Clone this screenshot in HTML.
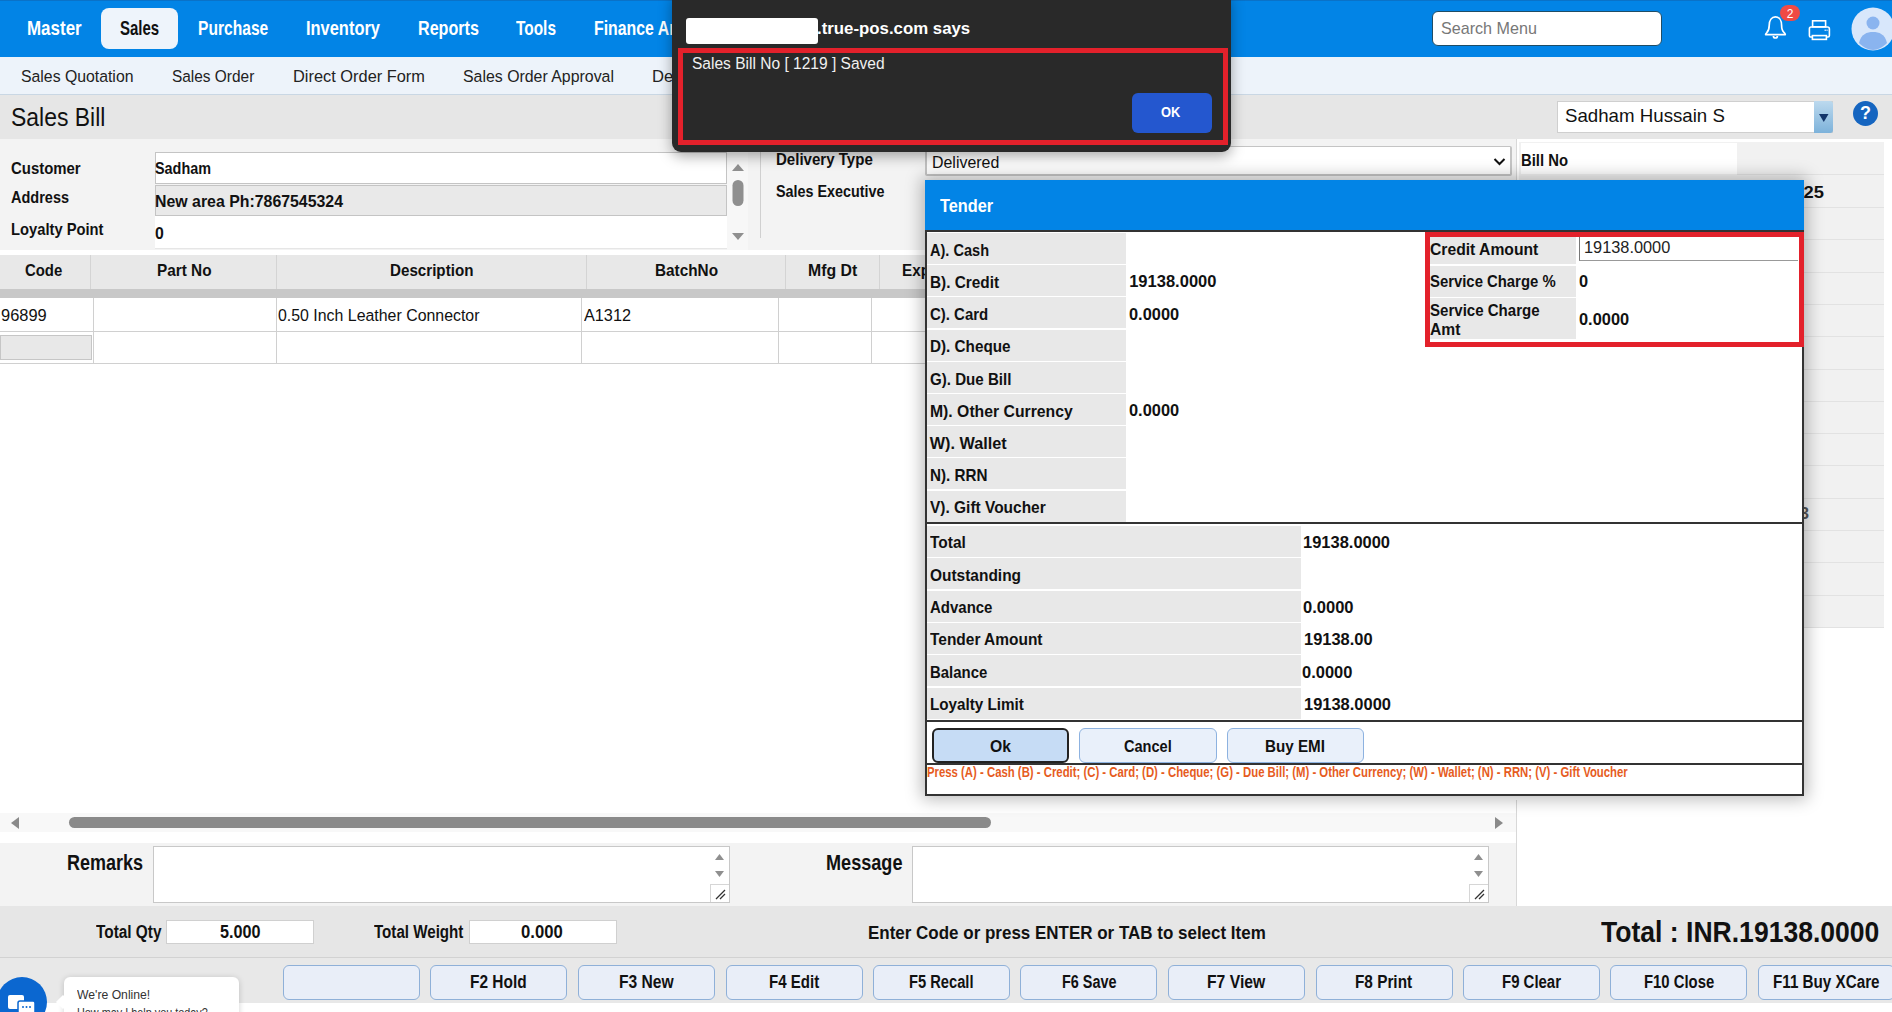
<!DOCTYPE html>
<html><head><meta charset="utf-8"><title>Sales Bill</title>
<style>
html,body{margin:0;padding:0;width:1892px;height:1012px;overflow:hidden;background:#fff;font-family:"Liberation Sans",sans-serif;position:relative}
.t{position:absolute;white-space:nowrap;line-height:1;transform-origin:0 0;font-family:"Liberation Sans",sans-serif}
</style></head><body>
<div style="position:absolute;left:0px;top:0px;width:1892px;height:57px;background:#0284e6"></div>
<div style="position:absolute;left:0px;top:0px;width:1892px;height:1px;background:#0a72c8"></div>
<div style="position:absolute;left:101px;top:8px;width:77px;height:41px;background:#eef4fb;border-radius:8px"></div>
<div style="position:absolute;left:0px;top:57px;width:1892px;height:37px;background:#edf3fa"></div>
<div style="position:absolute;left:0px;top:94px;width:1892px;height:1px;background:#c9d7e4"></div>
<div style="position:absolute;left:0px;top:95px;width:1892px;height:44px;background:#e6e6e6"></div>
<div style="position:absolute;left:0px;top:139px;width:1517px;height:111px;background:#f3f3f3"></div>
<div style="position:absolute;left:155px;top:152px;width:572px;height:32px;background:#fff;border:1px solid #c4c4c4;box-sizing:border-box"></div>
<div style="position:absolute;left:155px;top:185px;width:572px;height:31px;background:#e9e9e9;border:1px solid #c4c4c4;box-sizing:border-box"></div>
<div style="position:absolute;left:155px;top:216px;width:572px;height:33px;background:#fff;border-bottom:1px solid #e6e6e6;box-sizing:border-box"></div>
<div style="position:absolute;left:727px;top:152px;width:21px;height:98px;background:#f7f7f7"></div>
<svg style="position:absolute;left:727px;top:152px" width="22" height="98"><path d="M5 19 L11 12 L17 19 Z" fill="#8f8f8f"/><rect x="5.5" y="28" width="11" height="26" rx="5.5" fill="#8f8f8f"/><path d="M5 81 L11 88 L17 81 Z" fill="#8f8f8f"/></svg>
<div style="position:absolute;left:760px;top:152px;width:1px;height:86px;background:#d0d0d0"></div>
<div style="position:absolute;left:925px;top:146px;width:587px;height:30px;background:#fff;border:2px solid #c4c4c4;border-top-width:1px;border-radius:2px;box-sizing:border-box"></div>
<svg style="position:absolute;left:1493px;top:155px" width="14" height="14"><path d="M1.5 4 L6.5 9 L11.5 4" stroke="#111" stroke-width="2" fill="none"/></svg>
<div style="position:absolute;left:0px;top:255px;width:925px;height:34px;background:#e8e8e8"></div>
<div style="position:absolute;left:0px;top:289px;width:925px;height:9px;background:#c8c8c8"></div>
<div style="position:absolute;left:90px;top:255px;width:1px;height:34px;background:#d4d4d4"></div>
<div style="position:absolute;left:276px;top:255px;width:1px;height:34px;background:#d4d4d4"></div>
<div style="position:absolute;left:586px;top:255px;width:1px;height:34px;background:#d4d4d4"></div>
<div style="position:absolute;left:785px;top:255px;width:1px;height:34px;background:#d4d4d4"></div>
<div style="position:absolute;left:879px;top:255px;width:1px;height:34px;background:#d4d4d4"></div>
<div style="position:absolute;left:0px;top:298px;width:925px;height:65px;background:#fff"></div>
<div style="position:absolute;left:0px;top:331px;width:925px;height:1px;background:#d0d0d0"></div>
<div style="position:absolute;left:0px;top:363px;width:925px;height:1px;background:#d0d0d0"></div>
<div style="position:absolute;left:93px;top:298px;width:1px;height:65px;background:#d0d0d0"></div>
<div style="position:absolute;left:276px;top:298px;width:1px;height:65px;background:#d0d0d0"></div>
<div style="position:absolute;left:581px;top:298px;width:1px;height:65px;background:#d0d0d0"></div>
<div style="position:absolute;left:778px;top:298px;width:1px;height:65px;background:#d0d0d0"></div>
<div style="position:absolute;left:871px;top:298px;width:1px;height:65px;background:#d0d0d0"></div>
<div style="position:absolute;left:0px;top:335px;width:92px;height:25px;background:#e8e8e8;border:1px solid #c6c6c6;box-sizing:border-box"></div>
<div style="position:absolute;left:0px;top:813px;width:1517px;height:19px;background:#f8f8f8"></div>
<div style="position:absolute;left:69px;top:817px;width:922px;height:11px;background:#8a8a8a;border-radius:6px"></div>
<svg style="position:absolute;left:8px;top:816px" width="14" height="14"><path d="M11 1 L3 7 L11 13 Z" fill="#8a8a8a"/></svg>
<svg style="position:absolute;left:1492px;top:816px" width="14" height="14"><path d="M3 1 L11 7 L3 13 Z" fill="#8a8a8a"/></svg>
<div style="position:absolute;left:1516px;top:800px;width:1px;height:106px;background:#d8d8d8"></div>
<div style="position:absolute;left:0px;top:843px;width:1516px;height:63px;background:#f3f3f3"></div>
<div style="position:absolute;left:153px;top:846px;width:577px;height:57px;background:#fff;border:1px solid #c8c8c8;box-sizing:border-box"></div>
<div style="position:absolute;left:912px;top:846px;width:577px;height:57px;background:#fff;border:1px solid #c8c8c8;box-sizing:border-box"></div>
<svg style="position:absolute;left:710px;top:847px" width="19" height="55"><path d="M5 13 L9.5 7 L14 13 Z" fill="#8f8f8f"/><path d="M5 24 L9.5 30 L14 24 Z" fill="#8f8f8f"/><rect x="0.5" y="37.5" width="19" height="18" fill="#fff" stroke="#d6d6d6"/><path d="M6 52 L15 43 M10 52 L15 47" stroke="#333" stroke-width="1.3"/></svg>
<svg style="position:absolute;left:1469px;top:847px" width="19" height="55"><path d="M5 13 L9.5 7 L14 13 Z" fill="#8f8f8f"/><path d="M5 24 L9.5 30 L14 24 Z" fill="#8f8f8f"/><rect x="0.5" y="37.5" width="19" height="18" fill="#fff" stroke="#d6d6d6"/><path d="M6 52 L15 43 M10 52 L15 47" stroke="#333" stroke-width="1.3"/></svg>
<div style="position:absolute;left:0px;top:906px;width:1892px;height:51px;background:#e6e6e6"></div>
<div style="position:absolute;left:0px;top:957px;width:1892px;height:1px;background:#d2d2d2"></div>
<div style="position:absolute;left:166px;top:920px;width:148px;height:24px;background:#fff;border:1px solid #d0d0d0;box-sizing:border-box"></div>
<div style="position:absolute;left:469px;top:920px;width:148px;height:24px;background:#fff;border:1px solid #d0d0d0;box-sizing:border-box"></div>
<div style="position:absolute;left:0px;top:958px;width:1892px;height:45px;background:#e8e8e8"></div>
<div style="position:absolute;left:283px;top:965px;width:137px;height:35px;background:#e9eef8;border:1px solid #8fb0d8;border-radius:6px;box-sizing:border-box"></div>
<div style="position:absolute;left:430px;top:965px;width:137px;height:35px;background:#e9eef8;border:1px solid #8fb0d8;border-radius:6px;box-sizing:border-box"></div>
<div style="position:absolute;left:578px;top:965px;width:137px;height:35px;background:#e9eef8;border:1px solid #8fb0d8;border-radius:6px;box-sizing:border-box"></div>
<div style="position:absolute;left:726px;top:965px;width:137px;height:35px;background:#e9eef8;border:1px solid #8fb0d8;border-radius:6px;box-sizing:border-box"></div>
<div style="position:absolute;left:873px;top:965px;width:137px;height:35px;background:#e9eef8;border:1px solid #8fb0d8;border-radius:6px;box-sizing:border-box"></div>
<div style="position:absolute;left:1020px;top:965px;width:137px;height:35px;background:#e9eef8;border:1px solid #8fb0d8;border-radius:6px;box-sizing:border-box"></div>
<div style="position:absolute;left:1168px;top:965px;width:137px;height:35px;background:#e9eef8;border:1px solid #8fb0d8;border-radius:6px;box-sizing:border-box"></div>
<div style="position:absolute;left:1316px;top:965px;width:137px;height:35px;background:#e9eef8;border:1px solid #8fb0d8;border-radius:6px;box-sizing:border-box"></div>
<div style="position:absolute;left:1463px;top:965px;width:137px;height:35px;background:#e9eef8;border:1px solid #8fb0d8;border-radius:6px;box-sizing:border-box"></div>
<div style="position:absolute;left:1610px;top:965px;width:137px;height:35px;background:#e9eef8;border:1px solid #8fb0d8;border-radius:6px;box-sizing:border-box"></div>
<div style="position:absolute;left:1758px;top:965px;width:137px;height:35px;background:#e9eef8;border:1px solid #8fb0d8;border-radius:6px;box-sizing:border-box"></div>
<div class="t" style="left:27.4px;top:18.79px;font-size:19.42px;font-weight:bold;color:#ffffff;transform:scaleX(0.8737);">Master</div>
<div class="t" style="left:120.2px;top:18.79px;font-size:19.42px;font-weight:bold;color:#111;transform:scaleX(0.7724);">Sales</div>
<div class="t" style="left:197.6px;top:18.79px;font-size:19.42px;font-weight:bold;color:#ffffff;transform:scaleX(0.8040);">Purchase</div>
<div class="t" style="left:306.0px;top:18.79px;font-size:19.42px;font-weight:bold;color:#ffffff;transform:scaleX(0.8466);">Inventory</div>
<div class="t" style="left:418.0px;top:18.79px;font-size:19.42px;font-weight:bold;color:#ffffff;transform:scaleX(0.8313);">Reports</div>
<div class="t" style="left:516.0px;top:18.79px;font-size:19.42px;font-weight:bold;color:#ffffff;transform:scaleX(0.7945);">Tools</div>
<div class="t" style="left:594.0px;top:18.79px;font-size:19.42px;font-weight:bold;color:#ffffff;transform:scaleX(0.8168);">Finance Analysis</div>
<div class="t" style="left:21.1px;top:68.53px;font-size:15.94px;font-weight:normal;color:#222;transform:scaleX(0.9917);">Sales Quotation</div>
<div class="t" style="left:172.2px;top:68.53px;font-size:15.94px;font-weight:normal;color:#222;transform:scaleX(0.9676);">Sales Order</div>
<div class="t" style="left:293.0px;top:68.53px;font-size:15.94px;font-weight:normal;color:#222;transform:scaleX(1.0278);">Direct Order Form</div>
<div class="t" style="left:463.0px;top:68.53px;font-size:15.94px;font-weight:normal;color:#222;transform:scaleX(0.9965);">Sales Order Approval</div>
<div class="t" style="left:652.0px;top:68.53px;font-size:15.94px;font-weight:normal;color:#222;transform:scaleX(1.0420);">Delivery</div>
<div class="t" style="left:10.5px;top:105.11px;font-size:25.07px;font-weight:normal;color:#111;transform:scaleX(0.9155);">Sales Bill</div>
<div class="t" style="left:10.6px;top:160.79px;font-size:16.81px;font-weight:bold;color:#111;transform:scaleX(0.8883);">Customer</div>
<div class="t" style="left:10.6px;top:189.99px;font-size:16.81px;font-weight:bold;color:#111;transform:scaleX(0.8636);">Address</div>
<div class="t" style="left:10.6px;top:221.79px;font-size:16.81px;font-weight:bold;color:#111;transform:scaleX(0.8773);">Loyalty Point</div>
<div class="t" style="left:155.4px;top:160.79px;font-size:16.81px;font-weight:bold;color:#111;transform:scaleX(0.8563);">Sadham</div>
<div class="t" style="left:155.4px;top:194.19px;font-size:16.81px;font-weight:bold;color:#111;transform:scaleX(0.9453);">New area Ph:7867545324</div>
<div class="t" style="left:155.0px;top:225.99px;font-size:16.81px;font-weight:bold;color:#111;transform:scaleX(0.9410);">0</div>
<div class="t" style="left:776.4px;top:151.97px;font-size:16.96px;font-weight:bold;color:#111;transform:scaleX(0.8889);">Delivery Type</div>
<div class="t" style="left:776.4px;top:183.87px;font-size:16.96px;font-weight:bold;color:#111;transform:scaleX(0.8471);">Sales Executive</div>
<div class="t" style="left:931.7px;top:154.11px;font-size:16.09px;font-weight:normal;color:#111;transform:scaleX(0.9904);">Delivered</div>
<div class="t" style="left:24.8px;top:261.88px;font-size:16.23px;font-weight:bold;color:#111;transform:scaleX(0.9192);">Code</div>
<div class="t" style="left:156.5px;top:261.88px;font-size:16.23px;font-weight:bold;color:#111;transform:scaleX(0.9459);">Part No</div>
<div class="t" style="left:390.0px;top:261.88px;font-size:16.23px;font-weight:bold;color:#111;transform:scaleX(0.9351);">Description</div>
<div class="t" style="left:654.8px;top:261.88px;font-size:16.23px;font-weight:bold;color:#111;transform:scaleX(0.9455);">BatchNo</div>
<div class="t" style="left:807.8px;top:261.88px;font-size:16.23px;font-weight:bold;color:#111;transform:scaleX(0.9746);">Mfg Dt</div>
<div class="t" style="left:901.7px;top:261.88px;font-size:16.23px;font-weight:bold;color:#111;transform:scaleX(0.9396);">Exp Dt</div>
<div class="t" style="left:1.3px;top:307.41px;font-size:16.09px;font-weight:normal;color:#111;transform:scaleX(1.0216);">96899</div>
<div class="t" style="left:278.0px;top:307.41px;font-size:16.09px;font-weight:normal;color:#111;transform:scaleX(0.9887);">0.50 Inch Leather Connector</div>
<div class="t" style="left:584.0px;top:307.41px;font-size:16.09px;font-weight:normal;color:#111;transform:scaleX(1.0103);">A1312</div>
<div class="t" style="left:67.2px;top:852.68px;font-size:21.45px;font-weight:bold;color:#111;transform:scaleX(0.8397);">Remarks</div>
<div class="t" style="left:825.5px;top:852.68px;font-size:21.45px;font-weight:bold;color:#111;transform:scaleX(0.8442);">Message</div>
<div class="t" style="left:96.2px;top:922.95px;font-size:18.41px;font-weight:bold;color:#111;transform:scaleX(0.8355);">Total Qty</div>
<div class="t" style="left:219.5px;top:922.95px;font-size:18.41px;font-weight:bold;color:#111;transform:scaleX(0.8793);">5.000</div>
<div class="t" style="left:373.6px;top:922.95px;font-size:18.41px;font-weight:bold;color:#111;transform:scaleX(0.8223);">Total Weight</div>
<div class="t" style="left:520.7px;top:922.95px;font-size:18.41px;font-weight:bold;color:#111;transform:scaleX(0.9053);">0.000</div>
<div class="t" style="left:867.5px;top:922.81px;font-size:19.28px;font-weight:bold;color:#111;transform:scaleX(0.8812);">Enter Code or press ENTER or TAB to select Item</div>
<div class="t" style="left:1600.5px;top:917.24px;font-size:29.42px;font-weight:bold;color:#111;transform:scaleX(0.9027);">Total : INR.19138.0000</div>
<div class="t" style="left:470.0px;top:974.44px;font-size:17.83px;font-weight:bold;color:#111;transform:scaleX(0.8660);">F2 Hold</div>
<div class="t" style="left:618.5px;top:974.44px;font-size:17.83px;font-weight:bold;color:#111;transform:scaleX(0.8765);">F3 New</div>
<div class="t" style="left:768.6px;top:974.44px;font-size:17.83px;font-weight:bold;color:#111;transform:scaleX(0.8448);">F4 Edit</div>
<div class="t" style="left:908.9px;top:974.44px;font-size:17.83px;font-weight:bold;color:#111;transform:scaleX(0.8240);">F5 Recall</div>
<div class="t" style="left:1061.5px;top:974.44px;font-size:17.83px;font-weight:bold;color:#111;transform:scaleX(0.8087);">F6 Save</div>
<div class="t" style="left:1207.3px;top:974.44px;font-size:17.83px;font-weight:bold;color:#111;transform:scaleX(0.8811);">F7 View</div>
<div class="t" style="left:1355.2px;top:974.44px;font-size:17.83px;font-weight:bold;color:#111;transform:scaleX(0.8605);">F8 Print</div>
<div class="t" style="left:1501.6px;top:974.44px;font-size:17.83px;font-weight:bold;color:#111;transform:scaleX(0.8387);">F9 Clear</div>
<div class="t" style="left:1643.6px;top:974.44px;font-size:17.83px;font-weight:bold;color:#111;transform:scaleX(0.8336);">F10 Close</div>
<div class="t" style="left:1773.0px;top:974.44px;font-size:17.83px;font-weight:bold;color:#111;transform:scaleX(0.8531);">F11 Buy XCare</div>
<div style="position:absolute;left:1432px;top:11px;width:230px;height:35px;background:#fff;border:1px solid #1f4d66;border-radius:6px;box-sizing:border-box"></div>
<div class="t" style="left:1441.0px;top:20.16px;font-size:16.38px;font-weight:normal;color:#777;transform:scaleX(0.9856);">Search Menu</div>
<svg style="position:absolute;left:1762px;top:14px" width="28" height="28" viewBox="0 0 28 28"><path d="M3.6 20.6 Q3.6 19.6 4.6 18.8 Q7.2 16.5 7.2 11.5 C7.2 6.3 9.8 2.9 13.4 2.9 C17 2.9 19.6 6.3 19.6 11.5 Q19.6 16.5 22.4 18.8 Q23.3 19.6 23.3 20.6 Z" fill="none" stroke="#fff" stroke-width="1.7" stroke-linejoin="round"/><path d="M11.4 22 A2 2 0 0 0 15.4 22" fill="none" stroke="#fff" stroke-width="1.7"/></svg>
<div style="position:absolute;left:1780px;top:5px;width:20px;height:16px;border-radius:8px;background:#ef4a45;color:#fff;font:12px 'Liberation Sans',sans-serif;line-height:18px;text-align:center">2</div>
<svg style="position:absolute;left:1807px;top:17px" width="26" height="26" viewBox="0 0 26 26"><rect x="5.6" y="3.8" width="13" height="6" fill="none" stroke="#fff" stroke-width="1.6"/><path d="M4 10 H20.5 Q22.4 10 22.4 12 V18.5 Q22.4 20 21 20 H3.5 Q2.4 20 2.4 18.5 V12 Q2.4 10 4 10 Z" fill="none" stroke="#fff" stroke-width="1.6"/><rect x="5.4" y="18.6" width="14" height="3.8" fill="#0284e6" stroke="#fff" stroke-width="1.6"/><rect x="17.5" y="12.6" width="1.6" height="1.3" fill="#cfe3fa"/><rect x="19.5" y="12.6" width="1.2" height="1.3" fill="#cfe3fa"/></svg>
<svg style="position:absolute;left:1851px;top:7px" width="44" height="44" viewBox="0 0 44 44"><circle cx="22" cy="22" r="21.5" fill="#d8e7fb"/><circle cx="22" cy="16" r="6.5" fill="#8ab4ef"/><path d="M8 36 C10 27 16 25 22 25 C28 25 34 27 36 36 C32 40 27 43 22 43 C17 43 12 40 8 36 Z" fill="#8ab4ef"/></svg>
<div style="position:absolute;left:1557px;top:101px;width:276px;height:32px;background:#fff;border:1px solid #cfcfcf;box-sizing:border-box"></div>
<div style="position:absolute;left:1814px;top:101px;width:19px;height:32px;background:linear-gradient(#bcd9ee,#7db2da);border-radius:0 3px 3px 0"></div>
<svg style="position:absolute;left:1816px;top:110px" width="14" height="14"><path d="M3 4 L12.5 4 L7.75 12 Z" fill="#13356a"/></svg>
<div class="t" style="left:1565.0px;top:107.48px;font-size:18.84px;font-weight:normal;color:#111;transform:scaleX(0.9921);">Sadham Hussain S</div>
<div style="position:absolute;left:1853px;top:101px;width:25px;height:25px;border-radius:50%;background:#1565c0;color:#fff;font:bold 18px 'Liberation Sans',sans-serif;line-height:25px;text-align:center">?</div>
<div style="position:absolute;left:1516px;top:139px;width:1px;height:490px;background:#d8d8d8"></div>
<div style="position:absolute;left:1519px;top:142px;width:365px;height:486px;background:#f1f1f1;border-bottom:1px solid #e2e2e2;box-sizing:border-box"></div>
<div style="position:absolute;left:1521px;top:143px;width:216px;height:31px;background:#fff"></div>
<div style="position:absolute;left:1737px;top:174px;width:147px;height:1px;background:#e2e2e2"></div>
<div style="position:absolute;left:1519px;top:207px;width:365px;height:1px;background:#e2e2e2"></div>
<div style="position:absolute;left:1519px;top:239px;width:365px;height:1px;background:#e2e2e2"></div>
<div style="position:absolute;left:1519px;top:272px;width:365px;height:1px;background:#e2e2e2"></div>
<div style="position:absolute;left:1519px;top:304px;width:365px;height:1px;background:#e2e2e2"></div>
<div style="position:absolute;left:1519px;top:336px;width:365px;height:1px;background:#e2e2e2"></div>
<div style="position:absolute;left:1519px;top:369px;width:365px;height:1px;background:#e2e2e2"></div>
<div style="position:absolute;left:1519px;top:401px;width:365px;height:1px;background:#e2e2e2"></div>
<div style="position:absolute;left:1519px;top:433px;width:365px;height:1px;background:#e2e2e2"></div>
<div style="position:absolute;left:1519px;top:465px;width:365px;height:1px;background:#e2e2e2"></div>
<div style="position:absolute;left:1519px;top:498px;width:365px;height:1px;background:#e2e2e2"></div>
<div style="position:absolute;left:1519px;top:530px;width:365px;height:1px;background:#e2e2e2"></div>
<div style="position:absolute;left:1519px;top:562px;width:365px;height:1px;background:#e2e2e2"></div>
<div style="position:absolute;left:1519px;top:595px;width:365px;height:1px;background:#e2e2e2"></div>
<div class="t" style="left:1521.0px;top:153.29px;font-size:16.81px;font-weight:bold;color:#111;transform:scaleX(0.8829);">Bill No</div>
<div class="t" style="left:1730.0px;top:184.59px;font-size:16.81px;font-weight:bold;color:#111;transform:scaleX(1.0931);">25-07-2025</div>
<div class="t" style="left:1800.0px;top:505.79px;font-size:16.81px;font-weight:bold;color:#555;transform:scaleX(0.9624);">3</div>
<div style="position:absolute;left:925px;top:180px;width:879px;height:616px;box-shadow:0 0 16px 3px rgba(0,0,0,0.28);background:#fff"></div>
<div style="position:absolute;left:925px;top:180px;width:879px;height:51px;background:#0284e6"></div>
<div style="position:absolute;left:925px;top:230px;width:879px;height:566px;background:#fff;border:2px solid #333;box-sizing:border-box"></div>
<div style="position:absolute;left:927px;top:233px;width:199px;height:31px;background:#e8e8e8"></div>
<div style="position:absolute;left:927px;top:265px;width:199px;height:31px;background:#e8e8e8"></div>
<div style="position:absolute;left:927px;top:297px;width:199px;height:31px;background:#e8e8e8"></div>
<div style="position:absolute;left:927px;top:330px;width:199px;height:31px;background:#e8e8e8"></div>
<div style="position:absolute;left:927px;top:362px;width:199px;height:31px;background:#e8e8e8"></div>
<div style="position:absolute;left:927px;top:394px;width:199px;height:31px;background:#e8e8e8"></div>
<div style="position:absolute;left:927px;top:426px;width:199px;height:31px;background:#e8e8e8"></div>
<div style="position:absolute;left:927px;top:458px;width:199px;height:31px;background:#e8e8e8"></div>
<div style="position:absolute;left:927px;top:491px;width:199px;height:31px;background:#e8e8e8"></div>
<div style="position:absolute;left:927px;top:522px;width:875px;height:2px;background:#333"></div>
<div style="position:absolute;left:927px;top:526px;width:374px;height:31px;background:#e8e8e8"></div>
<div style="position:absolute;left:927px;top:558px;width:374px;height:31px;background:#e8e8e8"></div>
<div style="position:absolute;left:927px;top:591px;width:374px;height:31px;background:#e8e8e8"></div>
<div style="position:absolute;left:927px;top:623px;width:374px;height:31px;background:#e8e8e8"></div>
<div style="position:absolute;left:927px;top:655px;width:374px;height:31px;background:#e8e8e8"></div>
<div style="position:absolute;left:927px;top:688px;width:374px;height:31px;background:#e8e8e8"></div>
<div style="position:absolute;left:927px;top:720px;width:875px;height:2px;background:#333"></div>
<div style="position:absolute;left:927px;top:763px;width:875px;height:2px;background:#333"></div>
<div style="position:absolute;left:932px;top:728px;width:137px;height:35px;background:#c6dcf5;border:2px solid #222;border-radius:6px;box-sizing:border-box"></div>
<div style="position:absolute;left:1079px;top:728px;width:138px;height:35px;background:#e9f0fa;border:1px solid #8db2e0;border-radius:6px;box-sizing:border-box"></div>
<div style="position:absolute;left:1227px;top:728px;width:137px;height:35px;background:#e9f0fa;border:1px solid #8db2e0;border-radius:6px;box-sizing:border-box"></div>
<div style="position:absolute;left:1425px;top:232px;width:379px;height:115px;border:5px solid #e3212b;box-sizing:border-box;background:#fff"></div>
<div style="position:absolute;left:1430px;top:237px;width:146px;height:27px;background:#e8e8e8"></div>
<div style="position:absolute;left:1430px;top:266px;width:146px;height:31px;background:#e8e8e8"></div>
<div style="position:absolute;left:1430px;top:298px;width:146px;height:41px;background:#e8e8e8"></div>
<div style="position:absolute;left:1579px;top:237px;width:219px;height:24px;background:#fff;border-left:1px solid #777;border-bottom:1px solid #999;box-sizing:border-box"></div>
<div class="t" style="left:939.6px;top:197.47px;font-size:18.26px;font-weight:bold;color:#ffffff;transform:scaleX(0.8937);">Tender</div>
<div class="t" style="left:929.8px;top:241.88px;font-size:16.23px;font-weight:bold;color:#111;transform:scaleX(0.8976);">A). Cash</div>
<div class="t" style="left:929.8px;top:274.08px;font-size:16.23px;font-weight:bold;color:#111;transform:scaleX(0.9474);">B). Credit</div>
<div class="t" style="left:929.8px;top:306.28px;font-size:16.23px;font-weight:bold;color:#111;transform:scaleX(0.9219);">C). Card</div>
<div class="t" style="left:929.8px;top:338.48px;font-size:16.23px;font-weight:bold;color:#111;transform:scaleX(0.9408);">D). Cheque</div>
<div class="t" style="left:929.8px;top:370.68px;font-size:16.23px;font-weight:bold;color:#111;transform:scaleX(0.9317);">G). Due Bill</div>
<div class="t" style="left:929.8px;top:402.88px;font-size:16.23px;font-weight:bold;color:#111;transform:scaleX(0.9713);">M). Other Currency</div>
<div class="t" style="left:929.8px;top:435.08px;font-size:16.23px;font-weight:bold;color:#111;">W). Wallet</div>
<div class="t" style="left:929.8px;top:467.28px;font-size:16.23px;font-weight:bold;color:#111;transform:scaleX(0.9394);">N). RRN</div>
<div class="t" style="left:929.8px;top:499.48px;font-size:16.23px;font-weight:bold;color:#111;transform:scaleX(0.9535);">V). Gift Voucher</div>
<div class="t" style="left:1129.2px;top:273.84px;font-size:16.52px;font-weight:bold;color:#111;">19138.0000</div>
<div class="t" style="left:1128.6px;top:306.54px;font-size:16.52px;font-weight:bold;color:#111;transform:scaleX(0.9934);">0.0000</div>
<div class="t" style="left:1128.6px;top:402.64px;font-size:16.52px;font-weight:bold;color:#111;transform:scaleX(0.9934);">0.0000</div>
<div class="t" style="left:1429.9px;top:240.98px;font-size:16.23px;font-weight:bold;color:#111;transform:scaleX(0.9669);">Credit Amount</div>
<div class="t" style="left:1429.9px;top:272.98px;font-size:16.23px;font-weight:bold;color:#111;transform:scaleX(0.9166);">Service Charge %</div>
<div class="t" style="left:1429.9px;top:302.08px;font-size:16.23px;font-weight:bold;color:#111;transform:scaleX(0.9281);">Service Charge</div>
<div class="t" style="left:1429.9px;top:320.68px;font-size:16.23px;font-weight:bold;color:#111;transform:scaleX(0.9632);">Amt</div>
<div class="t" style="left:1584.4px;top:240.37px;font-size:15.65px;font-weight:normal;color:#222;transform:scaleX(1.0436);">19138.0000</div>
<div class="t" style="left:1578.6px;top:272.98px;font-size:16.23px;font-weight:bold;color:#111;transform:scaleX(1.0079);">0</div>
<div class="t" style="left:1578.6px;top:311.38px;font-size:16.23px;font-weight:bold;color:#111;transform:scaleX(1.0111);">0.0000</div>
<div class="t" style="left:929.9px;top:534.38px;font-size:16.23px;font-weight:bold;color:#111;transform:scaleX(0.9529);">Total</div>
<div class="t" style="left:929.9px;top:566.68px;font-size:16.23px;font-weight:bold;color:#111;transform:scaleX(0.9531);">Outstanding</div>
<div class="t" style="left:929.9px;top:598.98px;font-size:16.23px;font-weight:bold;color:#111;transform:scaleX(0.9237);">Advance</div>
<div class="t" style="left:929.9px;top:631.28px;font-size:16.23px;font-weight:bold;color:#111;transform:scaleX(0.9532);">Tender Amount</div>
<div class="t" style="left:929.9px;top:663.58px;font-size:16.23px;font-weight:bold;color:#111;transform:scaleX(0.9204);">Balance</div>
<div class="t" style="left:929.9px;top:695.88px;font-size:16.23px;font-weight:bold;color:#111;transform:scaleX(0.9390);">Loyalty Limit</div>
<div class="t" style="left:1302.7px;top:534.38px;font-size:16.23px;font-weight:bold;color:#111;transform:scaleX(1.0157);">19138.0000</div>
<div class="t" style="left:1303.0px;top:598.98px;font-size:16.23px;font-weight:bold;color:#111;transform:scaleX(1.0192);">0.0000</div>
<div class="t" style="left:1303.8px;top:631.28px;font-size:16.23px;font-weight:bold;color:#111;transform:scaleX(1.0133);">19138.00</div>
<div class="t" style="left:1301.8px;top:663.58px;font-size:16.23px;font-weight:bold;color:#111;transform:scaleX(1.0152);">0.0000</div>
<div class="t" style="left:1304.0px;top:695.88px;font-size:16.23px;font-weight:bold;color:#111;transform:scaleX(1.0145);">19138.0000</div>
<div class="t" style="left:990.0px;top:738.92px;font-size:16.67px;font-weight:bold;color:#111;transform:scaleX(0.9445);">Ok</div>
<div class="t" style="left:1123.6px;top:738.92px;font-size:16.67px;font-weight:bold;color:#111;transform:scaleX(0.8746);">Cancel</div>
<div class="t" style="left:1265.0px;top:738.92px;font-size:16.67px;font-weight:bold;color:#111;transform:scaleX(0.9126);">Buy EMI</div>
<div class="t" style="left:927.0px;top:765.42px;font-size:14.06px;font-weight:bold;color:#e65c1e;transform:scaleX(0.8083);">Press (A) - Cash (B) - Credit; (C) - Card; (D) - Cheque; (G) - Due Bill; (M) - Other Currency; (W) - Wallet; (N) - RRN; (V) - Gift Voucher</div>
<div style="position:absolute;left:672px;top:-8px;width:559px;height:160px;background:#292929;border-radius:9px;box-shadow:0 4px 14px rgba(0,0,0,0.35)"></div>
<div style="position:absolute;left:686px;top:18px;width:132px;height:26px;background:#fff;border-radius:3px"></div>
<div style="position:absolute;left:678px;top:48px;width:550px;height:97px;border:5px solid #e3212b;box-sizing:border-box"></div>
<div style="position:absolute;left:1132px;top:93px;width:80px;height:40px;background:#2457cf;border-radius:6px"></div>
<div class="t" style="left:817.4px;top:19.64px;font-size:16.40px;font-weight:bold;color:#ffffff;transform:scaleX(1.0256);">.true-pos.com says</div>
<div class="t" style="left:691.7px;top:55.41px;font-size:16.09px;font-weight:normal;color:#f0f0f0;transform:scaleX(0.9663);">Sales Bill No [ 1219 ] Saved</div>
<div class="t" style="left:1161.4px;top:105.19px;font-size:14.93px;font-weight:bold;color:#ffffff;transform:scaleX(0.8619);">OK</div>
<div style="position:absolute;left:64px;top:977px;width:175px;height:60px;background:#fff;border-radius:6px;box-shadow:0 1px 6px rgba(0,0,0,0.18)"></div>
<div style="position:absolute;left:58px;top:997px;width:10px;height:10px;background:#fff;transform:rotate(45deg)"></div>
<div style="position:absolute;left:-3px;top:977px;width:50px;height:50px;border-radius:50%;background:#0b67d0"></div>
<svg style="position:absolute;left:6px;top:993px" width="32" height="20"><rect x="2" y="2" width="16" height="14" rx="2" fill="#fff"/><rect x="12" y="8" width="17" height="13" rx="2" fill="#fff" stroke="#0b67d0" stroke-width="1.5"/><circle cx="17" cy="14" r="1" fill="#0b67d0"/><circle cx="20.5" cy="14" r="1" fill="#0b67d0"/><circle cx="24" cy="14" r="1" fill="#0b67d0"/></svg>
<div class="t" style="left:77.2px;top:989.39px;font-size:12.32px;font-weight:normal;color:#333;transform:scaleX(0.9903);">We're Online!</div>
<div class="t" style="left:77.2px;top:1006.59px;font-size:12.32px;font-weight:normal;color:#333;transform:scaleX(0.8803);">How may I help you today?</div>
</body></html>
